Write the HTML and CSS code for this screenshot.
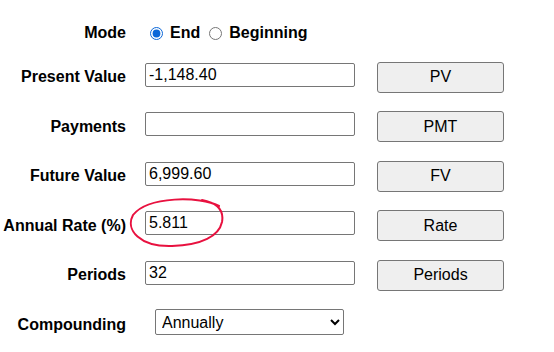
FILE: index.html
```html
<!DOCTYPE html>
<html lang="en">
<head>
  <meta charset="UTF-8">
  <title>TVM Calculator</title>
  <link rel="stylesheet" href="styles.css">
</head>
<body>
  <div class="calc">
    <!-- Payment timing -->
    <div class="row row-mode">
      <span class="label">Mode</span>
      <div class="mode-opts">
        <input type="radio" name="mode" id="modeEnd" checked><label for="modeEnd">End</label>
        <input type="radio" name="mode" id="modeBegin"><label for="modeBegin">Beginning</label>
      </div>
    </div>

    <div class="row">
      <label class="label" for="pv">Present Value</label>
      <input type="text" id="pv" class="field" value="-1,148.40">
      <button class="btn">PV</button>
    </div>

    <div class="row">
      <label class="label" for="pmt">Payments</label>
      <input type="text" id="pmt" class="field" value="">
      <button class="btn">PMT</button>
    </div>

    <div class="row">
      <label class="label" for="fv">Future Value</label>
      <input type="text" id="fv" class="field" value="6,999.60">
      <button class="btn">FV</button>
    </div>

    <div class="row">
      <label class="label" for="rate">Annual Rate (%)</label>
      <input type="text" id="rate" class="field" value="5.811">
      <button class="btn">Rate</button>
    </div>

    <div class="row">
      <label class="label" for="periods">Periods</label>
      <input type="text" id="periods" class="field" value="32">
      <button class="btn">Periods</button>
    </div>

    <div class="row">
      <label class="label" for="compounding">Compounding</label>
      <select id="compounding" class="select">
        <option>Annually</option>
        <option>Semi-annually</option>
        <option>Quarterly</option>
        <option>Monthly</option>
      </select>
    </div>
  </div>

  <!-- hand-drawn highlight round the rate -->
  <svg class="mark" width="100" height="54" viewBox="0 0 100 54">
    <path d="M 91 10 C 72 0, 20 0, 5 19 C -3 34, 12 51, 44 50 C 74 49, 91 40, 94 26 C 96 15, 90 7, 74 4" fill="none" stroke="#e8113f" stroke-width="2" stroke-linecap="round"/>
  </svg>
</body>
</html>
```

FILE: styles.css
```css
body {
  margin: 0;
  font-family: "Liberation Sans", Arial, sans-serif;
  font-size: 16px;
  color: #000;
  background: #fff;
  position: relative;
  width: 554px;
  height: 352px;
  overflow: hidden;
}
.calc {
  padding-top: 17px;
}
.row {
  display: flex;
  align-items: center;
  height: 49.5px;
}
.row-mode {
  height: 35.5px;
  padding-bottom: 3px;
  box-sizing: border-box;
}
.label {
  width: 126px;
  text-align: right;
  font-weight: bold;
  flex: none;
}
.mode-opts {
  margin-left: 19px;
  font-weight: bold;
  display: flex;
  align-items: center;
}
.mode-opts input {
  width: 13px;
  height: 13px;
  margin: 0 3px 0 5px;
  accent-color: #0b67d8;
}
.mode-opts label {
  margin-left: 4px;
  margin-right: 4px;
}
.field {
  margin: 0 0 5px 19px;
  width: 210px;
  height: 24px;
  box-sizing: border-box;
  border: 1px solid #767676;
  border-radius: 2px;
  padding: 0 3px;
  font-family: inherit;
  font-size: 16px;
  color: #000;
}
.btn {
  margin-left: 22px;
  width: 127px;
  height: 31px;
  background-color: #efefef;
  border: 1px solid #767676;
  border-radius: 3px;
  font-family: inherit;
  font-size: 16px;
  color: #000;
  padding: 0;
}
.select {
  margin: 0 0 5px 29px;
  width: 189px;
  height: 26px;
  box-sizing: border-box;
  border: 1px solid #767676;
  border-radius: 2px;
  padding: 0 2px;
  font-family: inherit;
  font-size: 16px;
  color: #000;
  background: #fff;
}
.mark {
  position: absolute;
  left: 128px;
  top: 196px;
}
```
